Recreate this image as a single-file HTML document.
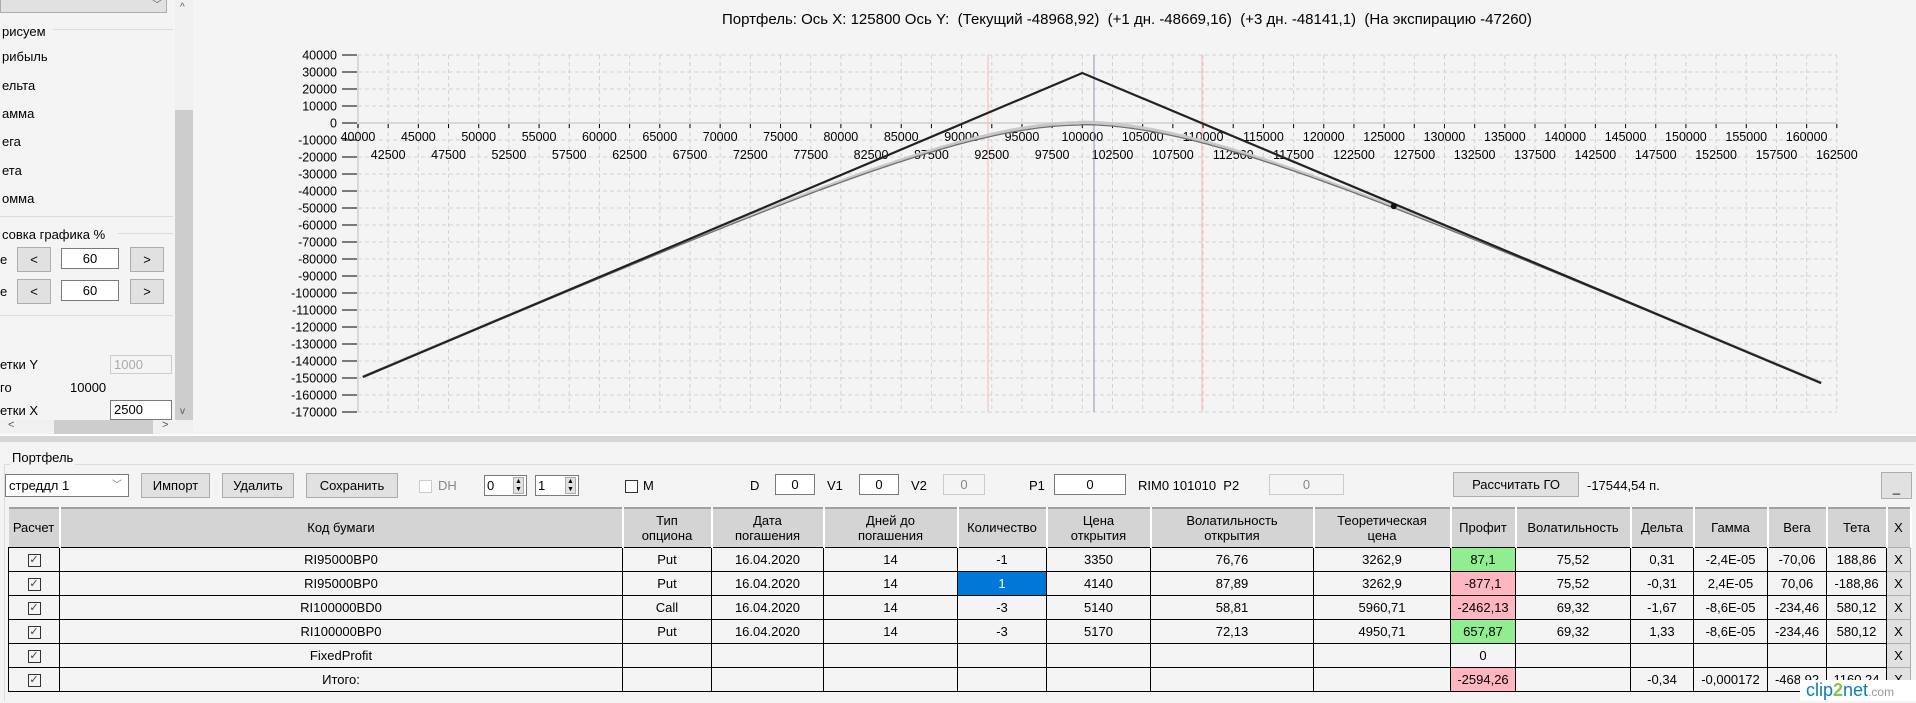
<!DOCTYPE html>
<html><head><meta charset="utf-8">
<style>
*{box-sizing:border-box;margin:0;padding:0}
body{width:1916px;height:701px;background:#f4f4f4;font-family:"Liberation Sans",sans-serif;font-size:13px;color:#000;position:relative;overflow:hidden}
.a{position:absolute;white-space:nowrap}
.btn{position:absolute;background:#e1e1e1;border:1px solid #adadad;text-align:center;font-size:13px}
.box{position:absolute;background:#fff;border:1px solid #7a7a7a;text-align:center;font-size:13px}
.dis{background:#f4f4f4;border-color:#ccc;color:#888}
.cb{position:absolute;width:13px;height:13px;border:1px solid #333;background:#fff}
table{position:absolute;left:8px;top:507px;border-collapse:collapse;font-size:13px;table-layout:fixed}
td,th{border:1px solid #000;text-align:center;height:24px;padding:0;overflow:hidden;white-space:nowrap}
th{background:#d4d4d4;font-weight:normal;height:39px;line-height:15px;border-color:#a0a0a0 #fff #a0a0a0 #a0a0a0;border-width:2px 2px 0 0}
.g{background:#90ee90}.p{background:#ffb6c1}.s{background:#0078d7;color:#fff}
.chk{display:inline-block;width:13px;height:13px;border:1px solid #333;font-size:11px;line-height:11px;color:#444;vertical-align:middle}
.x{background:#e1e1e1;border:1px solid #adadad}
</style></head><body>
<div class="a" style="left:0;top:0;width:175px;height:434px;background:#f4f4f4"></div>
<div class="a" style="left:0;top:0;width:167px;height:13px;background:#e1e1e1;border:1px solid #adadad;border-top:none"></div>
<div class="a" style="left:152px;top:-4px;font-size:10px;color:#666">﹀</div>
<div class="a" style="left:53px;top:29px;width:120px;height:1px;background:#dcdcdc"></div>
<div class="a" style="left:2px;top:24px">рисуем</div>
<div class="a" style="left:2px;top:49px">рибыль</div>
<div class="a" style="left:2px;top:78px">ельта</div>
<div class="a" style="left:2px;top:106px">амма</div>
<div class="a" style="left:2px;top:134px">ега</div>
<div class="a" style="left:2px;top:163px">ета</div>
<div class="a" style="left:2px;top:191px">омма</div>
<div class="a" style="left:0;top:216px;width:173px;height:1px;background:#dcdcdc"></div>
<div class="a" style="left:2px;top:227px">совка графика %</div>
<div class="a" style="left:118px;top:233px;width:55px;height:1px;background:#dcdcdc"></div>
<div class="a" style="left:0;top:252px">е</div>
<div class="btn" style="left:17px;top:247px;width:34px;height:25px;line-height:23px">&lt;</div>
<div class="box" style="left:61px;top:248px;width:58px;height:21px;line-height:19px">60</div>
<div class="btn" style="left:130px;top:247px;width:34px;height:25px;line-height:23px">&gt;</div>
<div class="a" style="left:0;top:284px">е</div>
<div class="btn" style="left:17px;top:279px;width:34px;height:25px;line-height:23px">&lt;</div>
<div class="box" style="left:61px;top:280px;width:58px;height:21px;line-height:19px">60</div>
<div class="btn" style="left:130px;top:279px;width:34px;height:25px;line-height:23px">&gt;</div>
<div class="a" style="left:0;top:315px;width:173px;height:1px;background:#dcdcdc"></div>
<div class="a" style="left:0;top:357px">етки Y</div>
<div class="box dis" style="left:110px;top:355px;width:62px;height:19px;line-height:17px;text-align:left;padding-left:3px;color:#aaa">1000</div>
<div class="a" style="left:0;top:380px">го</div>
<div class="a" style="left:70px;top:380px">10000</div>
<div class="a" style="left:0;top:403px">етки X</div>
<div class="box" style="left:110px;top:400px;width:62px;height:20px;line-height:18px;text-align:left;padding-left:3px">2500</div>
<div class="a" style="left:175px;top:0;width:18px;height:420px;background:#f0f0f0"></div>
<div class="a" style="left:175px;top:110px;width:18px;height:310px;background:#cdcdcd"></div>
<div class="a" style="left:180px;top:2px;font-size:10px;color:#555">^</div>
<div class="a" style="left:180px;top:406px;font-size:10px;color:#555">v</div>
<div class="a" style="left:0;top:420px;width:193px;height:14px;background:#f0f0f0"></div>
<div class="a" style="left:54px;top:420px;width:99px;height:14px;background:#cdcdcd"></div>
<div class="a" style="left:8px;top:419px;font-size:11px;color:#555">&lt;</div>
<div class="a" style="left:162px;top:419px;font-size:11px;color:#555">&gt;</div>
<div class="a" style="left:0;top:434px;width:1916px;height:2px;background:#fff"></div>
<div class="a" style="left:0;top:436px;width:1916px;height:6px;background:#d6d6d6"></div>

<div class="a" style="left:722px;top:11px;font-size:15px">Портфель: Ось X: 125800 Ось Y:&nbsp; (Текущий -48968,92)&nbsp; (+1 дн. -48669,16)&nbsp; (+3 дн. -48141,1)&nbsp; (На экспирацию -47260)</div>
<svg id="ch" class="a" style="left:0;top:0" width="1916" height="436" xmlns="http://www.w3.org/2000/svg"></svg>

<div class="a" style="left:4px;top:464px;width:1910px;height:1px;background:#dcdcdc"></div>
<div class="a" style="left:4px;top:464px;width:1px;height:237px;background:#dcdcdc"></div>
<div class="a" style="left:10px;top:450px;background:#f4f4f4;padding:0 2px">Портфель</div>
<div class="box" style="left:5px;top:474px;width:124px;height:23px;line-height:21px;text-align:left;padding-left:3px">стреддл 1<span style="position:absolute;right:6px;color:#777;font-size:10px">﹀</span></div>
<div class="btn" style="left:141px;top:473px;width:69px;height:25px;line-height:23px">Импорт</div>
<div class="btn" style="left:222px;top:473px;width:72px;height:25px;line-height:23px">Удалить</div>
<div class="btn" style="left:306px;top:473px;width:92px;height:25px;line-height:23px">Сохранить</div>
<div class="cb" style="left:419px;top:480px;border-color:#ccc"></div>
<div class="a" style="left:438px;top:478px;color:#888">DH</div>
<div class="box" style="left:484px;top:475px;width:43px;height:21px;text-align:left;padding-left:2px;line-height:19px">0</div>
<div class="a" style="left:513px;top:477px;width:11px;height:17px;background:#e1e1e1;border:1px solid #adadad;font-size:7px;line-height:8px;text-align:center">▲<br>▼</div>
<div class="box" style="left:535px;top:475px;width:44px;height:21px;text-align:left;padding-left:2px;line-height:19px">1</div>
<div class="a" style="left:565px;top:477px;width:11px;height:17px;background:#e1e1e1;border:1px solid #adadad;font-size:7px;line-height:8px;text-align:center">▲<br>▼</div>
<div class="cb" style="left:625px;top:480px"></div>
<div class="a" style="left:643px;top:478px">M</div>
<div class="a" style="left:750px;top:478px">D</div>
<div class="box" style="left:775px;top:474px;width:40px;height:21px;line-height:19px">0</div>
<div class="a" style="left:827px;top:478px">V1</div>
<div class="box" style="left:859px;top:474px;width:40px;height:21px;line-height:19px">0</div>
<div class="a" style="left:911px;top:478px">V2</div>
<div class="box dis" style="left:943px;top:474px;width:42px;height:21px;line-height:19px">0</div>
<div class="a" style="left:1029px;top:478px">P1</div>
<div class="box" style="left:1054px;top:474px;width:72px;height:21px;line-height:19px">0</div>
<div class="a" style="left:1138px;top:478px">RIM0 101010&nbsp; P2</div>
<div class="box dis" style="left:1269px;top:474px;width:75px;height:21px;line-height:19px">0</div>
<div class="btn" style="left:1453px;top:472px;width:126px;height:25px;line-height:23px">Рассчитать ГО</div>
<div class="a" style="left:1587px;top:478px">-17544,54 п.</div>
<div class="btn" style="left:1881px;top:472px;width:31px;height:27px;line-height:30px">_</div>

<table>
<colgroup><col style="width:51px"><col style="width:563px"><col style="width:89px"><col style="width:112px"><col style="width:134px"><col style="width:89px"><col style="width:104px"><col style="width:163px"><col style="width:137px"><col style="width:65px"><col style="width:115px"><col style="width:63px"><col style="width:74px"><col style="width:59px"><col style="width:60px"><col style="width:24px"></colgroup>
<tr><th>Расчет</th><th>Код бумаги</th><th>Тип<br>опциона</th><th>Дата<br>погашения</th><th>Дней до<br>погашения</th><th>Количество</th><th>Цена<br>открытия</th><th>Волатильность<br>открытия</th><th>Теоретическая<br>цена</th><th>Профит</th><th>Волатильность</th><th>Дельта</th><th>Гамма</th><th>Вега</th><th>Тета</th><th>X</th></tr>
<tr><td><span class="chk">✓</span></td><td>RI95000BP0</td><td>Put</td><td>16.04.2020</td><td>14</td><td>-1</td><td>3350</td><td>76,76</td><td>3262,9</td><td class="g">87,1</td><td>75,52</td><td>0,31</td><td>-2,4E-05</td><td>-70,06</td><td>188,86</td><td class="x">X</td></tr>
<tr><td><span class="chk">✓</span></td><td>RI95000BP0</td><td>Put</td><td>16.04.2020</td><td>14</td><td class="s">1</td><td>4140</td><td>87,89</td><td>3262,9</td><td class="p">-877,1</td><td>75,52</td><td>-0,31</td><td>2,4E-05</td><td>70,06</td><td>-188,86</td><td class="x">X</td></tr>
<tr><td><span class="chk">✓</span></td><td>RI100000BD0</td><td>Call</td><td>16.04.2020</td><td>14</td><td>-3</td><td>5140</td><td>58,81</td><td>5960,71</td><td class="p">-2462,13</td><td>69,32</td><td>-1,67</td><td>-8,6E-05</td><td>-234,46</td><td>580,12</td><td class="x">X</td></tr>
<tr><td><span class="chk">✓</span></td><td>RI100000BP0</td><td>Put</td><td>16.04.2020</td><td>14</td><td>-3</td><td>5170</td><td>72,13</td><td>4950,71</td><td class="g">657,87</td><td>69,32</td><td>1,33</td><td>-8,6E-05</td><td>-234,46</td><td>580,12</td><td class="x">X</td></tr>
<tr><td><span class="chk">✓</span></td><td>FixedProfit</td><td></td><td></td><td></td><td></td><td></td><td></td><td></td><td>0</td><td></td><td></td><td></td><td></td><td></td><td class="x">X</td></tr>
<tr><td><span class="chk">✓</span></td><td>Итого:</td><td></td><td></td><td></td><td></td><td></td><td></td><td></td><td class="p">-2594,26</td><td></td><td>-0,34</td><td>-0,000172</td><td>-468,92</td><td>1160,24</td><td class="x">X</td></tr>
</table>
<div class="a" style="left:1800px;top:680px;width:116px;height:21px;background:#fff;color:#0a7fb0;font-size:18px;padding-left:6px;line-height:21px">clip<b style="color:#8bc34a">2</b>net<span style="font-size:12px;color:#999">.com</span></div>

<script>
var s=document.getElementById('ch'),h='';
var X=function(v){return 358+(v-40000)*30.18/2500},Y=function(v){return 123-v*17/10000};
for(var i=0;i<=49;i++){var x=358+i*30.18;h+='<line x1="'+x+'" y1="55" x2="'+x+'" y2="412" stroke="#d2d2d2" stroke-dasharray="4,3"/>';}
for(var v=40000;v>=-170000;v-=10000){var y=Y(v);h+='<line x1="358" y1="'+y+'" x2="1837" y2="'+y+'" stroke="#d2d2d2" stroke-dasharray="4,3"/>';
h+='<line x1="342" y1="'+y+'" x2="357" y2="'+y+'" stroke="#000"/>';
h+='<text x="337" y="'+(y+4.5)+'" text-anchor="end" font-size="12.5" font-family="Liberation Sans">'+v+'</text>';}
h+='<line x1="358" y1="55" x2="358" y2="412" stroke="#d8d8d8" stroke-width="2"/>';
h+='<line x1="358" y1="123" x2="1837" y2="123" stroke="#d8d8d8" stroke-width="2"/>';
for(var i=0;i<=49;i++){var x=358+i*30.18,v=40000+i*2500;h+='<line x1="'+x+'" y1="124" x2="'+x+'" y2="128" stroke="#000"/>';
h+='<text x="'+x+'" y="'+(i%2==0?141:159)+'" text-anchor="middle" font-size="12.5" font-family="Liberation Sans">'+v+'</text>';}
h+='<line x1="988" y1="55" x2="988" y2="412" stroke="#ffb4b4"/><line x1="1202" y1="55" x2="1202" y2="412" stroke="#ffb4b4"/><line x1="1094" y1="55" x2="1094" y2="412" stroke="#8896b4"/>';
function curve(e,off){var p=[];for(var v=40400;v<=161200;v+=400){var d=v-100000,k=d<0?3:2.98,a=Math.abs(d);var f=29400-k*(a+e*Math.exp(-a/e))+off*Math.exp(-a/30000);p.push(X(v).toFixed(1)+','+Y(f).toFixed(1));}return p.join(' ');}
h+='<polyline points="'+curve(10200,1500)+'" fill="none" stroke="#c8c8c8" stroke-width="3"/>';
h+='<polyline points="'+curve(10200,0)+'" fill="none" stroke="#707070" stroke-width="1.3"/>';
h+='<polyline points="'+X(40400)+','+Y(-149400)+' '+X(100000)+','+Y(29400)+' '+X(161200)+','+Y(-152976)+'" fill="none" stroke="#222" stroke-width="2.2"/>';
h+='<circle cx="'+X(125800)+'" cy="'+Y(-48968)+'" r="3" fill="#111"/>';
s.innerHTML=h;
</script>
</body></html>
